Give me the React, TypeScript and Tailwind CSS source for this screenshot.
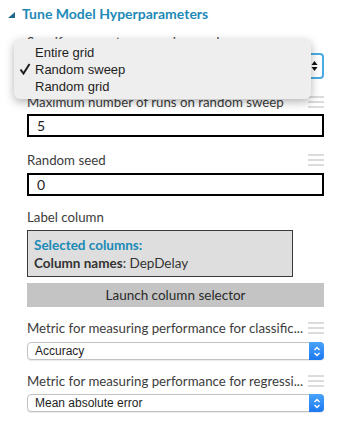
import React from "react";

function Grip() {
  return (
    <div className="flex w-[16px] flex-col gap-[3px]">
      <div className="h-[2px] bg-[#dcdcdc]" />
      <div className="h-[2px] bg-[#dcdcdc]" />
      <div className="h-[2px] bg-[#dcdcdc]" />
    </div>
  );
}

function Label({ text, grip = true }: { text: string; grip?: boolean }) {
  return (
    <div className="flex h-[18px] items-center justify-between">
      <span className="truncate text-[13.25px] leading-[18px] text-[#3c3c3c]">{text}</span>
      {grip && <Grip />}
    </div>
  );
}

function MacSelect({ value }: { value: string }) {
  return (
    <div className="flex h-[18px] items-stretch rounded-[4px] border border-[#c2c2c2] bg-white shadow-[0_1px_0_rgba(0,0,0,0.08)]">
      <div className="flex flex-1 items-center pl-[7px] font-['Liberation_Sans',sans-serif] text-[12px] text-[#1e1e1e]">
        {value}
      </div>
      <div className="-my-px -mr-px flex w-[15px] items-center justify-center rounded-r-[4px] bg-gradient-to-b from-[#4aa3fb] to-[#1a78f0]">
        <svg width="8" height="11" viewBox="0 0 8 11" fill="none" stroke="white" strokeWidth="1.4">
          <path d="M1.5 4 L4 1.5 L6.5 4" />
          <path d="M1.5 7 L4 9.5 L6.5 7" />
        </svg>
      </div>
    </div>
  );
}

export default function App() {
  return (
    <div className="relative h-[427px] w-[348px] overflow-hidden bg-white font-['Lato',sans-serif]">
      {/* Header */}
      <div className="flex h-[20px] items-center pl-[8px] mt-[4px]">
        <svg width="8" height="6" viewBox="0 0 8 6" className="mr-[6px] mt-[1px]">
          <polygon points="0,6 7,6 7,0" fill="#1d6a8a" />
        </svg>
        <span className="text-[14px] font-bold leading-[20px] text-[#1e8ab8]">Tune Model Hyperparameters</span>
      </div>

      <div className="pl-[27px] pr-[24px]">
        <div className="mt-[9px]">
          <Label text="Specify parameter sweeping mode" grip={false} />
        </div>
        <div className="mt-[2px] flex h-[26px] items-center justify-between rounded-[4px] border-2 border-[#49ace4] bg-white pl-[8px] pr-[4px]">
          <span className="font-['Liberation_Sans',sans-serif] text-[13px] text-[#222]">Random sweep</span>
          <svg width="7" height="12" viewBox="0 0 7 12">
            <polygon points="3.5,1 6.5,5 0.5,5" fill="#111" />
            <polygon points="3.5,11 6.5,7 0.5,7" fill="#111" />
          </svg>
        </div>

        <div className="mt-[14px]">
          <Label text="Maximum number of runs on random sweep" />
        </div>
        <div className="mt-[3px] flex h-[23px] items-center border-2 border-black pl-[8px] text-[14px] text-[#222]">5</div>

        <div className="mt-[14px]">
          <Label text="Random seed" />
        </div>
        <div className="mt-[4px] flex h-[23px] items-center border-2 border-black pl-[8px] text-[14px] text-[#222]">0</div>

        <div className="mt-[12px]">
          <Label text="Label column" grip={false} />
        </div>
        <div className="mt-[4px] flex h-[47px] w-[266px] flex-col justify-center border border-[#3a3a3a] bg-[#dedede] pl-[6px] text-[13.5px] leading-[18px]">
          <span className="font-bold text-[#1a8ab7]">Selected columns:</span>
          <span className="text-[#333]">
            <b>Column names</b>: DepDelay
          </span>
        </div>
        <div className="mt-[6px] flex h-[24px] items-center justify-center bg-[#c4c4c4] text-[13.5px] font-normal text-[#2a2a2a]">
          Launch column selector
        </div>

        <div className="mt-[12px]">
          <Label text="Metric for measuring performance for classific..." />
        </div>
        <div className="mt-[5px]">
          <MacSelect value="Accuracy" />
        </div>

        <div className="mt-[12px]">
          <Label text="Metric for measuring performance for regressi..." />
        </div>
        <div className="mt-[4px]">
          <MacSelect value="Mean absolute error" />
        </div>
      </div>

      {/* Open dropdown menu */}
      <div className="absolute left-[14px] top-[39px] flex h-[60px] w-[297px] flex-col justify-center rounded-[6px] bg-[#eeeeee] font-['Liberation_Sans',sans-serif] text-[13px] leading-[17px] text-[#1e1e1e] shadow-[0_3px_10px_rgba(0,0,0,0.3)]">
        <div className="pl-[21px]">Entire grid</div>
        <div className="flex items-center">
          <span className="flex w-[21px] justify-center">
            <svg width="12" height="12" viewBox="0 0 12 12" fill="none" stroke="#1e1e1e" strokeWidth="2">
              <path d="M1.5 6.5 L4.5 10.5 L10.5 1" />
            </svg>
          </span>
          Random sweep
        </div>
        <div className="pl-[21px]">Random grid</div>
      </div>
    </div>
  );
}
